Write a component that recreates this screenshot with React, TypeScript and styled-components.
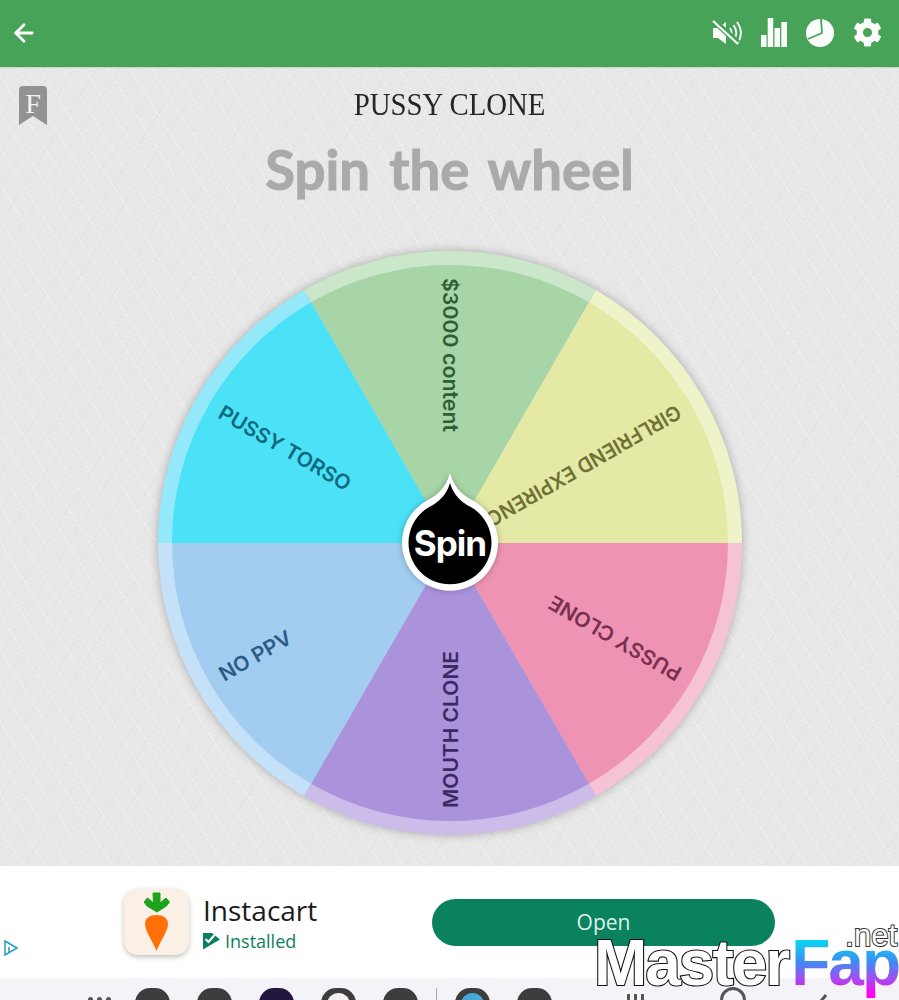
import { ArrowLeft } from 'lucide-react';
import { FaCog } from 'react-icons/fa';
import { styled, createGlobalStyle } from 'styled-components';

const GlobalStyle = createGlobalStyle`
  html, body {
    margin: 0;
    padding: 0;
    background: #f4f4f8;
  }
  * {
    box-sizing: border-box;
  }
`;

const Page = styled.div`
  position: relative;
  display: flex;
  flex-direction: column;
  width: 899px;
  height: 1000px;
  overflow: hidden;
  font-family: 'Open Sans', sans-serif;
`;

const Header = styled.header`
  display: flex;
  align-items: center;
  justify-content: space-between;
  height: 68px;
  padding: 0 17px 2px 10px;
  background: #46a358;
  border-bottom: 1px solid #c4dec8;
  color: #fbfdfb;
`;

const HeaderActions = styled.div`
  display: flex;
  align-items: center;
  gap: 19px;
`;

const Main = styled.main`
  position: relative;
  flex: 1;
  display: flex;
  flex-direction: column;
  align-items: center;
  padding-top: 18px;
  background-color: #e7e7e7;
  background-image:
    repeating-linear-gradient(58deg, rgba(255, 255, 255, 0.3) 0 1px, transparent 1px 19px),
    repeating-linear-gradient(-58deg, rgba(200, 200, 200, 0.16) 0 1px, transparent 1px 19px),
    repeating-linear-gradient(20deg, rgba(255, 255, 255, 0.12) 0 1px, transparent 1px 5px);
`;

const Bookmark = styled.div`
  position: absolute;
  top: 18px;
  left: 19px;
  display: flex;
  justify-content: center;
  width: 28px;
  height: 39px;
  padding-top: 4px;
  background: #929292;
  clip-path: path('M4 0H24a4 4 0 0 1 4 4V39L14 30L0 39V4a4 4 0 0 1 4-4Z');
  color: #f4f4f4;
  font-family: 'Liberation Serif', serif;
  font-size: 28px;
  line-height: 28px;
`;

const ListName = styled.h2`
  margin: 0;
  height: 36px;
  color: #262626;
  font-family: 'Liberation Serif', serif;
  font-size: 32px;
  font-weight: 400;
  line-height: 36px;
  transform: scaleX(0.9);
`;

const Heading = styled.h1`
  margin: 16px 0 0;
  height: 62px;
  color: #aaaaaa;
  font-family: 'Lato', sans-serif;
  font-size: 54.500px;
  font-weight: 700;
  line-height: 62px;
  word-spacing: 6px;
  -webkit-text-stroke: 1px #aaaaaa;
`;

const WheelSvg = styled.svg`
  display: block;
  margin-top: 43px;
  overflow: visible;
`;

const WheelFace = styled.g`
  filter: drop-shadow(0 0 5px rgba(0, 0, 0, 0.28));
`;

const SliceLabel = styled.text`
  font-family: 'Inter', sans-serif;
  font-size: 20.500px;
  font-weight: 600;
  dominant-baseline: central;
`;

const SpinLabel = styled.text`
  fill: #fff;
  font-family: 'Inter', sans-serif;
  font-size: 35px;
  font-weight: 700;
  letter-spacing: -1px;
  text-anchor: middle;
  dominant-baseline: central;
`;

const Ad = styled.section`
  position: relative;
  display: flex;
  align-items: center;
  height: 112px;
  padding: 0 0 0 124px;
  background: #fff;
`;

const AdChoices = styled.svg`
  position: absolute;
  left: 4px;
  top: 74px;
`;

const AppIcon = styled.div`
  flex: none;
  display: flex;
  width: 65px;
  height: 66px;
  margin-top: -1px;
  border-radius: 14px;
  background: #faf0e6;
  box-shadow: 0 2px 5px rgba(60, 40, 20, 0.3);
`;

const AdText = styled.div`
  width: 243px;
  padding-left: 14px;
`;

const AppName = styled.div`
  color: #1b1b1b;
  font-size: 28px;
  line-height: 38px;
`;

const AppStatus = styled.div`
  display: flex;
  align-items: center;
  gap: 5px;
  color: #0d7f60;
  font-size: 18px;
  line-height: 24px;
`;

const OpenButton = styled.button`
  width: 343px;
  height: 47px;
  border: none;
  border-radius: 24px;
  background: #0a8260;
  color: #def2ea;
  font-family: 'Open Sans', sans-serif;
  font-size: 21px;
`;

const Dock = styled.footer`
  display: flex;
  height: 22px;
  padding: 10px 0 0 88px;
  background: #f4f4f8;
`;

const DockDots = styled.div`
  display: flex;
  gap: 4px;
  width: 47px;
  padding-top: 9px;
`;

const DockDot = styled.span`
  width: 5px;
  height: 5px;
  border-radius: 50%;
  background: #555;
`;

const DockIcon = styled.div<{ $bg: string; $accent?: string }>`
  position: relative;
  flex: none;
  width: 35px;
  height: 35px;
  margin-right: 27px;
  border-radius: 15px;
  background: ${p => p.$bg};
  &::after {
    content: '';
    display: ${p => (p.$accent ? 'block' : 'none')};
    position: absolute;
    top: 5px;
    left: 6px;
    width: 23px;
    height: 23px;
    border-radius: 50%;
    background: ${p => p.$accent};
  }
`;

const DockDivider = styled.span`
  flex: none;
  width: 1px;
  height: 12px;
  margin: 0 18px 0 -9px;
  background: #aaa;
`;

const NavBars = styled.div`
  display: flex;
  gap: 4px;
  margin-left: 48px;
  padding-top: 6px;
`;

const NavBar = styled.span`
  width: 3px;
  height: 8px;
  background: #555;
`;

const NavHome = styled.span`
  width: 26px;
  height: 26px;
  margin: -1px 0 0 76px;
  border: 3px solid #555;
  border-radius: 50%;
`;

const NavBack = styled.span`
  width: 3px;
  height: 8px;
  margin: 6px 0 0 76px;
  background: #555;
  transform: rotate(40deg);
`;

const Watermark = styled.div`
  position: absolute;
  right: 0;
  bottom: 0;
  display: flex;
  color: #fff;
  font-family: 'Liberation Sans', sans-serif;
  font-size: 64px;
  font-weight: 700;
  line-height: 73px;
  letter-spacing: -2px;
  white-space: nowrap;
`;

const MarkMaster = styled.span`
  -webkit-text-stroke: 2.200px #111;
  paint-order: stroke fill;
`;

const MarkFap = styled.span`
  padding-left: 3px;
  background: linear-gradient(180deg, #00e4f2 12%, #3d8cf2 48%, #a050f0 70%, #ff00f0 92%);
  -webkit-background-clip: text;
  background-clip: text;
  -webkit-text-fill-color: transparent;
`;

const MarkNet = styled.span`
  position: absolute;
  top: -7px;
  right: 2px;
  font-size: 31px;
  font-weight: 400;
  line-height: 32px;
  letter-spacing: 0;
  -webkit-text-stroke: 2px #333;
  paint-order: stroke fill;
`;

const CENTER = 300;
const OUTER = 292;
const INNER = 278;

// clockwise from the top slice, angle is where the slice points
const slices = [
  { label: '$3000 content', angle: -90, fill: '#a8d5a7', rim: '#cae7c9', ink: '#2b5f35', length: 154 },
  { label: 'GIRLFRIEND EXPIRENCE', angle: -30, fill: '#e5e9a6', rim: '#eff3c9', ink: '#6e7233', length: 233 },
  { label: 'PUSSY CLONE', angle: 30, fill: '#ee93b3', rim: '#f6c3d6', ink: '#78304e', length: 149 },
  { label: 'MOUTH CLONE', angle: 90, fill: '#aa93db', rim: '#cbbcea', ink: '#3a2a62', length: 157 },
  { label: 'NO PPV', angle: 150, fill: '#a2cdf0', rim: '#c4e1f7', ink: '#2a5c86', length: 80 },
  { label: 'PUSSY TORSO', angle: 210, fill: '#4be1f7', rim: '#93e9f9', ink: '#0f6a80', length: 149 },
];

const wedge = (angle: number, radius: number) => {
  const from = ((angle - 30) * Math.PI) / 180;
  const to = ((angle + 30) * Math.PI) / 180;
  const x1 = CENTER + radius * Math.cos(from);
  const y1 = CENTER + radius * Math.sin(from);
  const x2 = CENTER + radius * Math.cos(to);
  const y2 = CENTER + radius * Math.sin(to);
  return `M${CENTER} ${CENTER}L${x1} ${y1}A${radius} ${radius} 0 0 1 ${x2} ${y2}Z`;
};

const MuteIcon = () => (
  <svg width="30" height="28" viewBox="0 0 30 28" fill="none">
    <path d="M1 9h5l8-6v22l-8-6H1z" fill="currentColor" />
    <path d="M18 9c2 3 2 7 0 10M21.500 6c3.500 5 3.500 11 0 16M25 3c5 7 5 15 0 22" stroke="currentColor" strokeWidth="1.800" />
    <path d="M1 1l25 23" stroke="#46a358" strokeWidth="6" />
    <path d="M1 2l25 23" stroke="currentColor" strokeWidth="2.200" />
  </svg>
);

const BarsIcon = () => (
  <svg width="26" height="29" viewBox="0 0 26 29" fill="currentColor">
    <rect x="0" y="17" width="5.500" height="12" />
    <rect x="6.700" y="0" width="5.500" height="29" />
    <rect x="13.500" y="10" width="5.500" height="19" />
    <rect x="20.300" y="4" width="5.700" height="25" />
  </svg>
);

const PieIcon = () => (
  <svg width="28" height="28" viewBox="0 0 28 28">
    <circle cx="14" cy="14" r="14" fill="currentColor" />
    <path d="M15 0l1 14L2 20" fill="none" stroke="#46a358" strokeWidth="1.800" />
  </svg>
);

const Carrot = () => (
  <svg width="65" height="66" viewBox="0 0 65 66">
    <path d="M32.500 62C29 53 21 42 21 35c0-6 5-9 11.500-9S44 29 44 35c0 7-8 18-11.500 27z" fill="#ff7009" />
    <path
      d="M29 4h7v10l6-5 3.500 4-3 4-9.500 6-10-6-3-4 3.500-4 6 5z"
      fill="#1ca51c"
      stroke="#1ca51c"
      strokeLinejoin="round"
    />
  </svg>
);

const InstalledBadge = () => (
  <svg width="17" height="17" viewBox="0 0 17 17">
    <path d="M0 0h9l8 6.500L0 16.500z" fill="#0d7f60" />
    <path d="M2.500 6l3 3 6-7" fill="none" stroke="#fff" strokeWidth="2" />
  </svg>
);

export default function App() {
  return (
    <Page>
      <GlobalStyle />
      <Header>
        <ArrowLeft size={28} strokeWidth={2.4} />
        <HeaderActions>
          <MuteIcon />
          <BarsIcon />
          <PieIcon />
          <FaCog size={29} />
        </HeaderActions>
      </Header>

      <Main>
        <Bookmark>F</Bookmark>
        <ListName>PUSSY CLONE</ListName>
        <Heading>Spin the wheel</Heading>
        <WheelSvg width="600" height="600" viewBox="0 0 600 600">
          <WheelFace>
            {slices.map(s => (
              <path key={s.label} d={wedge(s.angle, OUTER)} fill={s.rim} />
            ))}
          </WheelFace>
          {slices.map(s => (
            <path key={s.label} d={wedge(s.angle, INNER)} fill={s.fill} />
          ))}
          {slices.map(s => (
            <g key={s.label} transform={`rotate(${s.angle + 180} ${CENTER} ${CENTER})`}>
              <SliceLabel
                x={CENTER - 265}
                y={CENTER}
                fill={s.ink}
                textLength={s.length}
                lengthAdjust="spacingAndGlyphs"
              >
                {s.label}
              </SliceLabel>
            </g>
          ))}
          <path
            d="M300 230C304 244 311 251 322 257A48 48 0 1 1 278 257C289 251 296 244 300 230Z"
            fill="#fff"
            filter="drop-shadow(0 0 3px rgba(0,0,0,.25))"
          />
          <path
            d="M300 240C303 250 308 256 317 262A41.500 41.500 0 1 1 283 262C292 256 297 250 300 240Z"
            fill="#000"
          />
          <SpinLabel x={CENTER} y={CENTER}>
            Spin
          </SpinLabel>
        </WheelSvg>
      </Main>

      <Ad>
        <AdChoices width="15" height="16" viewBox="0 0 15 16" fill="none">
          <path d="M1 1l12 7-12 7z" stroke="#1f9dc0" strokeWidth="1.500" />
          <path d="M5 7v5" stroke="#1f9dc0" strokeWidth="1.500" />
        </AdChoices>
        <AppIcon>
          <Carrot />
        </AppIcon>
        <AdText>
          <AppName>Instacart</AppName>
          <AppStatus>
            <InstalledBadge />
            Installed
          </AppStatus>
        </AdText>
        <OpenButton>Open</OpenButton>
      </Ad>

      <Dock>
        <DockDots>
          <DockDot />
          <DockDot />
          <DockDot />
        </DockDots>
        <DockIcon $bg="#3d3d3d" />
        <DockIcon $bg="#3d3d3d" />
        <DockIcon $bg="#23163f" $accent="radial-gradient(circle at 50% 50%, #eec98a 0 3px, transparent 3.500px)" />
        <DockIcon $bg="#3d3d3d" $accent="radial-gradient(circle at 50% 75%, #d24a3e 0 7px, #f4efef 7.500px)" />
        <DockIcon $bg="#3d3d3d" />
        <DockDivider />
        <DockIcon $bg="#3d3d3d" $accent="#45a8d6" />
        <DockIcon $bg="#3d3d3d" />
        <NavBars>
          <NavBar />
          <NavBar />
          <NavBar />
        </NavBars>
        <NavHome />
        <NavBack />
      </Dock>

      <Watermark>
        <MarkMaster>Master</MarkMaster>
        <MarkFap>Fap</MarkFap>
        <MarkNet>.net</MarkNet>
      </Watermark>
    </Page>
  );
}
